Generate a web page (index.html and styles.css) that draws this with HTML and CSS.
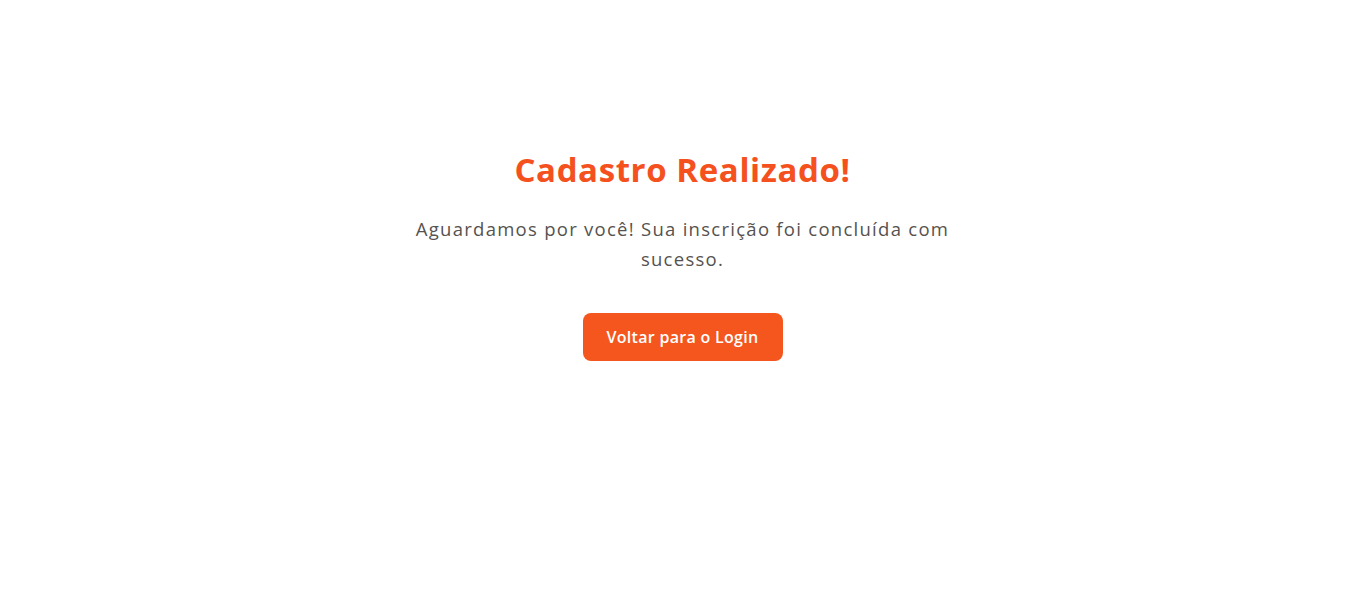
FILE: index.html
```html
<!DOCTYPE html>
<html lang="pt-BR">
<head>
<meta charset="utf-8">
<title>Cadastro Realizado</title>
<link rel="stylesheet" href="styles.css">
</head>
<body>
<main class="page">
  <section class="card">
    <h1 class="title">Cadastro Realizado!</h1>
    <p class="message">Aguardamos por você! Sua inscrição foi concluída com sucesso.</p>
    <button class="btn" type="button">Voltar para o Login</button>
  </section>
</main>
</body>
</html>
```
FILE: styles.css
```css
* { box-sizing: border-box; }
html, body { margin: 0; padding: 0; background: #ffffff; }
body { font-family: "Open Sans", "DejaVu Sans", sans-serif; }
.page {
  display: flex;
  justify-content: center;
  padding-top: 148px;
}
.card {
  width: 560px;
  display: flex;
  flex-direction: column;
  align-items: center;
  text-align: center;
}
.title {
  margin: 0;
  font-size: 33px;
  line-height: 44px;
  font-weight: 700;
  letter-spacing: 0.6px;
  color: #f4511e;
}
.message {
  margin: 22px 0 0;
  max-width: 556px;
  font-size: 18.5px;
  line-height: 30px;
  letter-spacing: 1.27px;
  color: #56524f;
}
.btn {
  margin-top: 39px;
  width: 200px;
  height: 48px;
  border: none;
  border-radius: 8px;
  background: #f4561e;
  color: #ffffff;
  font-family: inherit;
  font-size: 16px;
  font-weight: 600;
  letter-spacing: 0.3px;
}
```
